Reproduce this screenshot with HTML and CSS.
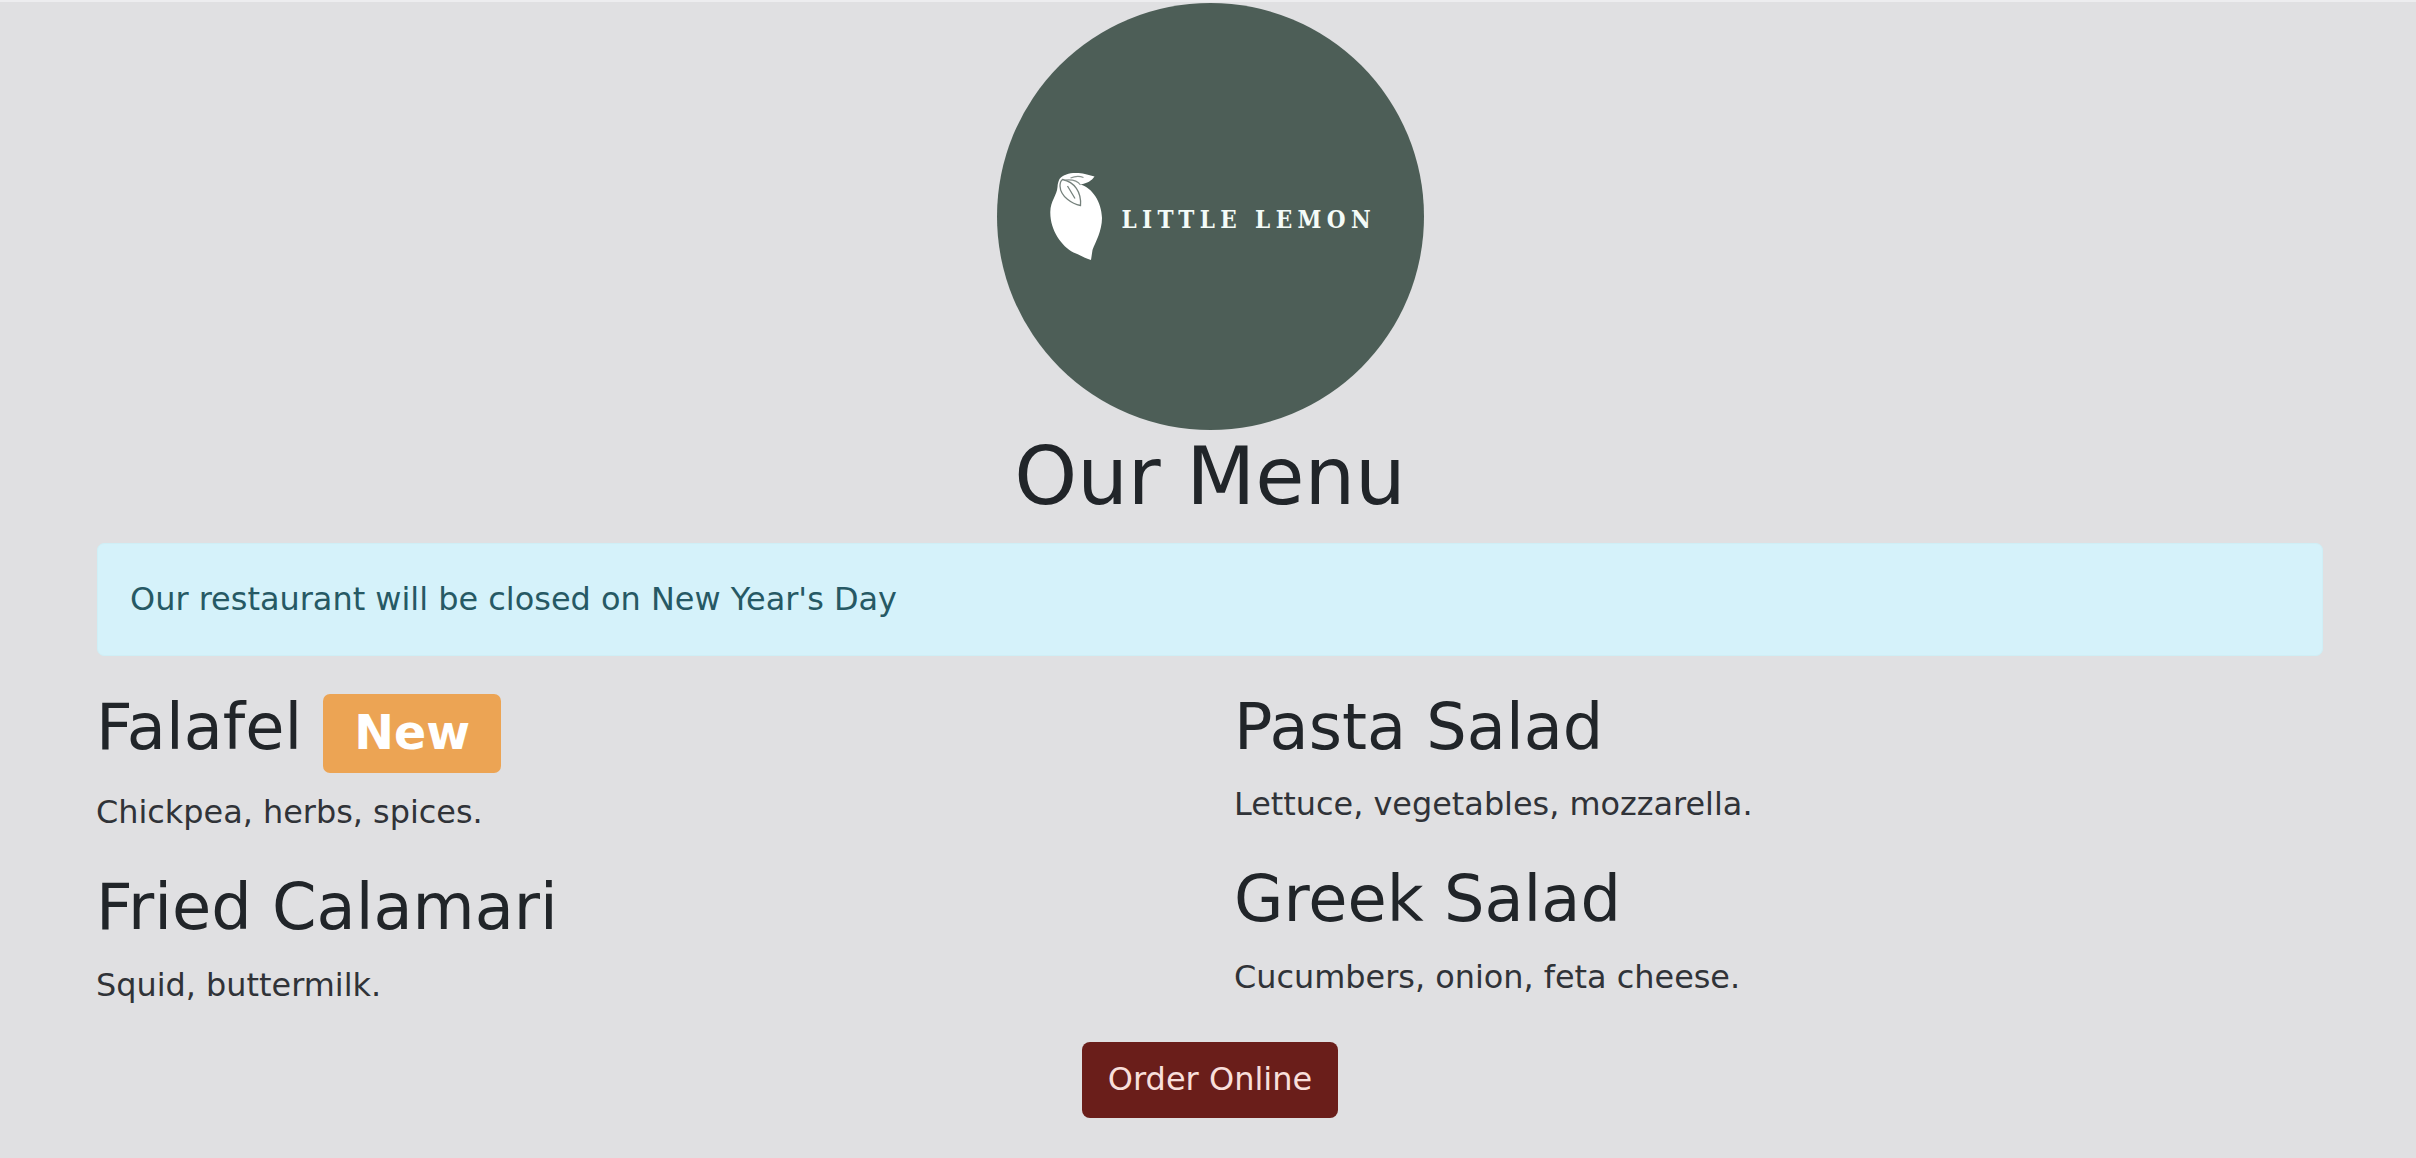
FILE: index.html
```html
<!DOCTYPE html>
<html lang="en">
<head>
<meta charset="utf-8">
<title>Little Lemon</title>
<link rel="stylesheet" href="styles.css">
</head>
<body>
<main class="container">
  <header class="masthead">
    <svg class="logo" viewBox="0 0 427 427" role="img" aria-label="Little Lemon">
      <circle cx="213.500" cy="213.500" r="213.500" fill="#4d5e57"/>
      <g transform="translate(-997.500 -3)">
        <path d="M1060 179C1064 174 1071 172.500 1079 173C1085 173.500 1090 175.500 1095 176.500C1092 181 1088 183 1081 184.500C1093 188 1102 202 1102.500 218C1102.500 231 1096 242 1093 250L1091.500 260C1087 259 1082 255.500 1074 252.500C1062 246 1050.500 230 1050.800 212C1051 201 1057.500 195 1058 187C1058 184 1059 181 1060 179Z" fill="#fff"/>
        <path d="M1063 179.500C1075 182 1082 192 1081 205.500C1073 204 1061 197 1060.500 186C1060.500 183 1061 181 1063 179.500ZM1068 186L1075.500 198.500" fill="none" stroke="#75817c" stroke-width="1.300"/>
        <path d="M1071 178Q1078 175 1084 177.500M1066 180Q1077 179 1081 185" fill="none" stroke="#87918d" stroke-width="1.100"/>
        <text class="logo-text" transform="translate(1122 228) scale(.9 1)" textLength="277" lengthAdjust="spacing">LITTLE LEMON</text>
      </g>
    </svg>
    <h1 class="title">Our Menu</h1>
  </header>
  <div class="alert">Our restaurant will be closed on New Year's Day</div>
  <div class="menu">
    <section class="column">
      <h2 class="dish dish-badged"><span>Falafel</span><span class="badge">New</span></h2>
      <p class="desc">Chickpea, herbs, spices.</p>
      <h2 class="dish">Fried Calamari</h2>
      <p class="desc desc-last">Squid, buttermilk.</p>
    </section>
    <section class="column">
      <h2 class="dish">Pasta Salad</h2>
      <p class="desc">Lettuce, vegetables, mozzarella.</p>
      <h2 class="dish">Greek Salad</h2>
      <p class="desc desc-last">Cucumbers, onion, feta cheese.</p>
    </section>
  </div>
  <div class="actions"><button class="button" type="button">Order Online</button></div>
</main>
</body>
</html>
```
FILE: styles.css
```css
* { box-sizing: border-box; }
body {
  margin: 0;
  min-height: 1158px;
  border-top: 2px solid #ededef;
  background: #e0e0e2;
  color: #212529;
  font: 32px/48px "DejaVu Sans", sans-serif;
}
h1, h2, p { margin: 0; font-weight: 400; }
.container { width: 2226px; margin-left: 97px; }
.masthead {
  display: flex;
  flex-direction: column;
  align-items: center;
  height: 541px;
  padding-top: 1px;
}
.logo {
  width: 427px;
  height: 427px;
  margin-left: 1px;
  overflow: visible;
}
.logo-text {
  font: bold 24px "DejaVu Serif", serif;
  fill: #f4fbf8;
}
.title { margin-top: -1px; font-size: 80px; line-height: 96px; }
.alert {
  height: 113px;
  padding: 31px 32px;
  border: 1px solid #cfeff6;
  border-radius: 7px;
  background: #d5f2fa;
  color: #265964;
  font-size: 31.950px;
}
.menu {
  display: grid;
  grid-template-columns: 1138px 1fr;
  margin-top: 33px;
  margin-left: -1px;
}
.dish {
  margin-bottom: 14px;
  font-size: 63.800px;
  line-height: 77px;
}
.dish-badged {
  display: flex;
  align-items: flex-start;
  height: 85px;
}
.badge {
  width: 178px;
  height: 79px;
  margin-top: 5px;
  margin-left: 21px;
  border-radius: 7px;
  background: #eca454;
  color: #fff;
  font-size: 47.500px;
  font-weight: 700;
  line-height: 77px;
  text-align: center;
}
.desc {
  margin-bottom: 33px;
  color: #303338;
  font-size: 31.900px;
}
.desc-last { margin-top: 15px; margin-bottom: 33px; }
.dish:has(+ .desc-last) { margin-bottom: 0; }
.actions { display: flex; justify-content: center; }
.button {
  width: 256px;
  height: 76px;
  padding: 0 0 2px;
  border: 0;
  border-radius: 8px;
  background: #6a1e1a;
  color: #f8dfdb;
  font: inherit;
}
```
